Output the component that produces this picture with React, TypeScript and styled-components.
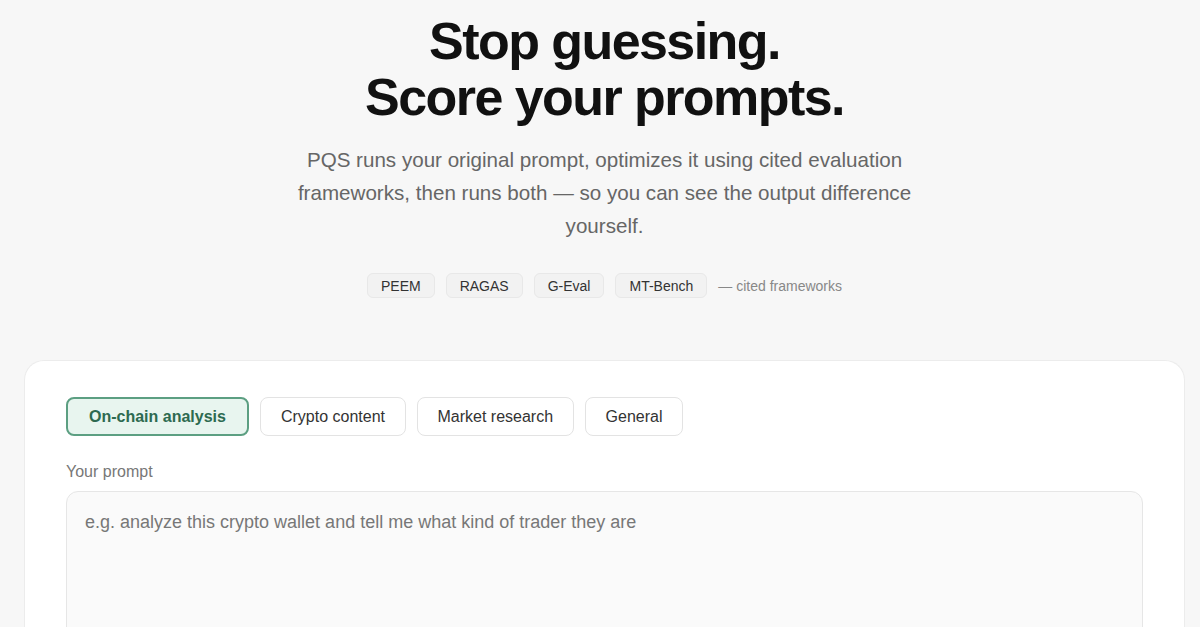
import styled, { createGlobalStyle } from 'styled-components';

const GlobalStyle = createGlobalStyle`
  * {
    box-sizing: border-box;
  }

  body {
    margin: 0;
    background-color: #f7f7f7;
    font-family: 'Liberation Sans', Arial, Helvetica, sans-serif;
    color: #111;
  }
`;

const Page = styled.main`
  padding: 13px 15px 0 24px;
`;

const Hero = styled.section`
  display: flex;
  flex-direction: column;
  align-items: center;
  text-align: center;
`;

const Title = styled.h1`
  margin: 0;
  font-size: 52px;
  line-height: 56px;
  font-weight: 700;
  letter-spacing: -0.03em;
  color: #111;
`;

const Lead = styled.p`
  margin: 18px 0 0;
  max-width: 640px;
  font-size: 20.6px;
  line-height: 33px;
  color: #666;
`;

const Frameworks = styled.div`
  display: flex;
  align-items: center;
  gap: 11px;
  margin-top: 31px;
`;

const Pill = styled.span`
  display: inline-flex;
  align-items: center;
  height: 25px;
  padding: 0 13px;
  border: 1px solid #e8e8e8;
  border-radius: 6px;
  background-color: #f2f2f2;
  font-size: 14px;
  color: #333;
`;

const Note = styled.span`
  font-size: 14px;
  color: #888;
`;

const Card = styled.section`
  margin-top: 62px;
  padding: 36px 41px 0 41px;
  background-color: #fff;
  border: 1px solid #ececec;
  border-bottom: none;
  border-radius: 20px 20px 0 0;
`;

const Tabs = styled.div`
  display: flex;
  gap: 11.5px;
`;

const Tab = styled.button<{ $active?: boolean }>`
  height: 39px;
  padding: 0 ${({ $active }) => ($active ? '21px' : '19.5px')};
  border: ${({ $active }) => ($active ? '2px solid #5c9f82' : '1px solid #e3e3e3')};
  border-radius: 8px;
  background-color: ${({ $active }) => ($active ? '#e8f5ef' : '#fff')};
  font-family: inherit;
  font-size: 16px;
  font-weight: ${({ $active }) => ($active ? 700 : 400)};
  color: ${({ $active }) => ($active ? '#2d6a50' : '#333')};
  cursor: pointer;
`;

const Label = styled.label`
  display: block;
  margin-top: 26px;
  font-size: 16px;
  line-height: 20px;
  color: #777;
`;

const PromptInput = styled.textarea`
  display: block;
  width: 100%;
  height: 220px;
  margin-top: 9px;
  padding: 17px 18px;
  border: 1px solid #e6e6e6;
  border-radius: 12px;
  background-color: #fafafa;
  font-family: inherit;
  font-size: 18px;
  line-height: 27px;
  color: #333;
  resize: none;
  outline: none;

  &::placeholder {
    color: #777;
  }
`;

const categories = ['On-chain analysis', 'Crypto content', 'Market research', 'General'];
const frameworks = ['PEEM', 'RAGAS', 'G-Eval', 'MT-Bench'];

const App = () => {
  return (
    <>
      <GlobalStyle />
      <Page>
        <Hero>
          <Title>
            Stop guessing.
            <br />
            Score your prompts.
          </Title>
          <Lead>
            PQS runs your original prompt, optimizes it using cited evaluation frameworks, then runs
            both — so you can see the output difference yourself.
          </Lead>
          <Frameworks>
            {frameworks.map((name) => (
              <Pill key={name}>{name}</Pill>
            ))}
            <Note>— cited frameworks</Note>
          </Frameworks>
        </Hero>
        <Card>
          <Tabs>
            {categories.map((name, i) => (
              <Tab key={name} $active={i === 0}>
                {name}
              </Tab>
            ))}
          </Tabs>
          <Label htmlFor="prompt">Your prompt</Label>
          <PromptInput
            id="prompt"
            placeholder="e.g. analyze this crypto wallet and tell me what kind of trader they are"
          />
        </Card>
      </Page>
    </>
  );
};

export default App;
